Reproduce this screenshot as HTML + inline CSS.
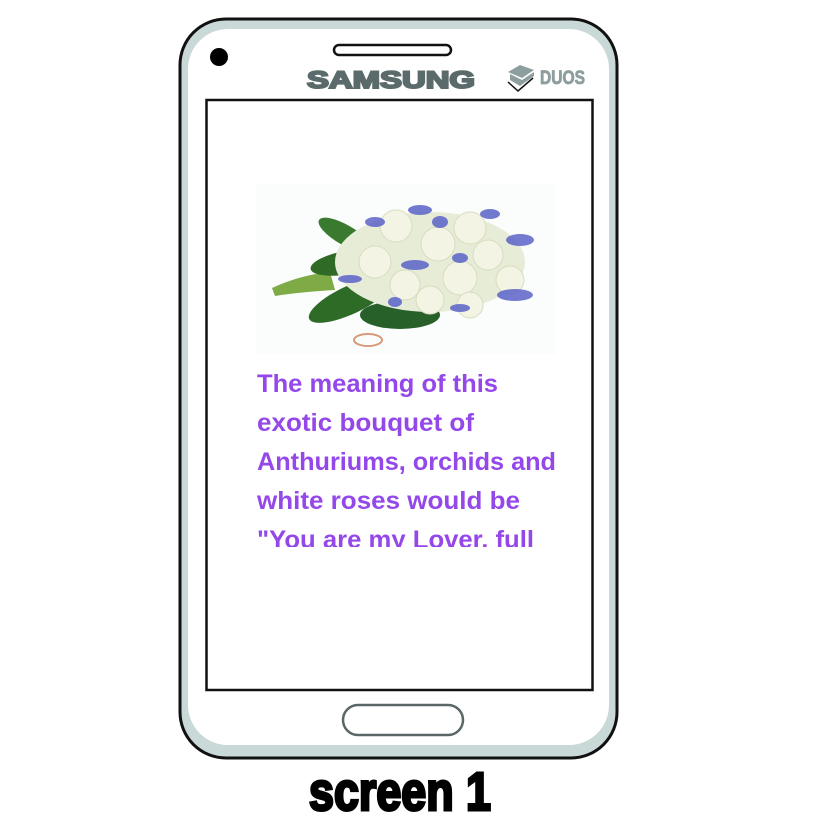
<!DOCTYPE html>
<html><head><meta charset="utf-8"><style>
html,body{margin:0;padding:0;background:#fff;width:827px;height:827px;overflow:hidden}
svg{display:block}
</style></head><body>
<svg width="827" height="827" viewBox="0 0 827 827" xmlns="http://www.w3.org/2000/svg">
<rect x="180" y="19" width="437" height="739" rx="46" fill="#c9d9d7" stroke="#111" stroke-width="3"/>
<rect x="188" y="29" width="421" height="716" rx="40" fill="#fff"/>
<circle cx="219" cy="57" r="9" fill="#000"/>
<rect x="334" y="45" width="117" height="10" rx="5" fill="#fff" stroke="#111" stroke-width="2.5"/>
<text x="391" y="88" text-anchor="middle" font-family="Liberation Sans, sans-serif" font-weight="bold" font-size="24" fill="#5b6a6a" stroke="#5b6a6a" stroke-width="2" textLength="168" lengthAdjust="spacingAndGlyphs">SAMSUNG</text>
<polygon points="508,72 520,65 534,70 522,78" fill="#8e9e9e"/>
<polygon points="510,74 522,80 534,72 534,76 520,86 510,80" fill="#8e9e9e"/>
<polyline points="508,82 518,91 533,78" fill="none" stroke="#111" stroke-width="1.5"/>
<text x="540" y="84" font-family="Liberation Sans Narrow, Liberation Sans, sans-serif" font-weight="bold" font-size="19" fill="#8e9e9e" stroke="#8e9e9e" stroke-width="0.8" textLength="45" lengthAdjust="spacingAndGlyphs">DUOS</text>
<rect x="206.5" y="100" width="386" height="590" fill="#fff" stroke="#111" stroke-width="2.5"/>
<rect x="343" y="705" width="120" height="30" rx="15" fill="#fff" stroke="#5b6666" stroke-width="2.5"/>
<!-- bouquet -->
<g>
<rect x="256" y="184" width="300" height="170" fill="#fbfcfc"/>
<path d="M272,288 Q300,275 330,272 L335,290 Q300,292 275,296 Z" fill="#7eab45"/>
<ellipse cx="350" cy="262" rx="40" ry="12" fill="#2f6a26" transform="rotate(-10 350 262)"/>
<ellipse cx="350" cy="300" rx="45" ry="14" fill="#2e6b27" transform="rotate(-25 350 300)"/>
<ellipse cx="345" cy="235" rx="30" ry="10" fill="#3a7a2e" transform="rotate(30 345 235)"/>
<ellipse cx="400" cy="315" rx="40" ry="14" fill="#28602a"/>
<ellipse cx="430" cy="262" rx="95" ry="50" fill="#e6ecd6"/>
<g fill="#f3f4e4" stroke="#d8dcc0" stroke-width="1">
<circle cx="396" cy="226" r="16"/><circle cx="438" cy="244" r="17"/><circle cx="375" cy="262" r="16"/>
<circle cx="470" cy="228" r="16"/><circle cx="488" cy="255" r="15"/><circle cx="460" cy="278" r="17"/>
<circle cx="405" cy="285" r="15"/><circle cx="510" cy="280" r="14"/><circle cx="430" cy="300" r="14"/><circle cx="470" cy="305" r="13"/>
</g>
<g fill="#5a63c8" opacity="0.85">
<ellipse cx="420" cy="210" rx="12" ry="5"/><ellipse cx="440" cy="222" rx="8" ry="6"/><ellipse cx="375" cy="222" rx="10" ry="5"/>
<ellipse cx="415" cy="265" rx="14" ry="5"/><ellipse cx="520" cy="240" rx="14" ry="6"/><ellipse cx="515" cy="295" rx="18" ry="6"/>
<ellipse cx="460" cy="258" rx="8" ry="5"/><ellipse cx="350" cy="279" rx="12" ry="4"/><ellipse cx="395" cy="302" rx="7" ry="5"/>
<ellipse cx="490" cy="214" rx="10" ry="5"/><ellipse cx="460" cy="308" rx="10" ry="4"/>
</g>
<ellipse cx="368" cy="340" rx="14" ry="6" fill="none" stroke="#d69a7a" stroke-width="2"/>
</g>
<g font-family="Liberation Sans, sans-serif" font-weight="bold" font-size="25" fill="#9448ea">
<text x="257" y="392" textLength="241" lengthAdjust="spacingAndGlyphs">The meaning of this</text>
<text x="257" y="431" textLength="217" lengthAdjust="spacingAndGlyphs">exotic bouquet of</text>
<text x="257" y="470" textLength="299" lengthAdjust="spacingAndGlyphs">Anthuriums, orchids and</text>
<text x="257" y="509" textLength="263" lengthAdjust="spacingAndGlyphs">white roses would be</text>
</g>
<clipPath id="c"><rect x="250" y="510" width="320" height="37"/></clipPath>
<text clip-path="url(#c)" x="257" y="548" font-family="Liberation Sans, sans-serif" font-weight="bold" font-size="25" fill="#9448ea" textLength="277" lengthAdjust="spacingAndGlyphs">"You are my Lover, full</text>
<text x="400" y="810" text-anchor="middle" font-family="Liberation Sans Narrow, Liberation Sans, sans-serif" font-weight="bold" font-size="54" fill="#000" stroke="#000" stroke-width="3" textLength="182" lengthAdjust="spacingAndGlyphs">screen 1</text>
</svg>
</body></html>
